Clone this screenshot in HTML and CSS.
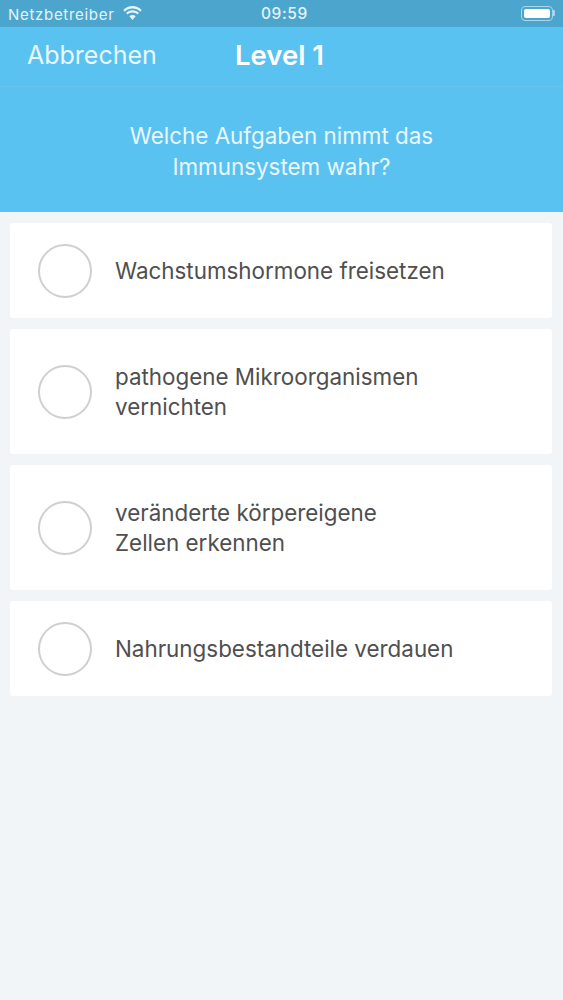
FILE: index.html
```html
<!DOCTYPE html>
<html lang="de">
<head>
<meta charset="utf-8">
<title>Level 1</title>
<link rel="stylesheet" href="styles.css">
</head>
<body>
<div class="status">
  <div class="status-left">
    <span class="carrier">Netzbetreiber</span>
    <svg class="wifi" width="19" height="14" viewBox="0 0 19 14"><path d="M9.500 2.600c3 0 5.700 1.200 7.700 3.100l1.500-1.800C16.200 1.500 13 0 9.500 0S2.800 1.500.3 3.900l1.500 1.800c2-1.900 4.700-3.100 7.700-3.100z" fill="#e6f3f9"/><path d="M9.500 6.600c1.900 0 3.600.7 4.900 1.900l1.500-1.800C14.200 5.100 12 4.200 9.500 4.200S4.800 5.100 3.100 6.700l1.500 1.800c1.300-1.200 3-1.900 4.900-1.900z" fill="#e6f3f9"/><path d="M9.500 9c-1.200 0-2.300.4-3.200 1.200l3.200 3.800 3.200-3.800C11.800 9.400 10.700 9 9.500 9z" fill="#e6f3f9"/></svg>
  </div>
  <span class="time">09:59</span>
  <div class="battery"><div class="battery-fill"></div></div>
</div>
<header class="nav">
  <span class="cancel">Abbrechen</span>
  <span class="title">Level 1</span>
</header>
<div class="question">Welche Aufgaben nimmt das<br>Immunsystem wahr?</div>
<main class="answers">
  <div class="answer single"><span class="radio"></span><span class="label">Wachstumshormone freisetzen</span></div>
  <div class="answer double"><span class="radio"></span><span class="label">pathogene Mikroorganismen<br>vernichten</span></div>
  <div class="answer double"><span class="radio"></span><span class="label">veränderte körpereigene<br>Zellen erkennen</span></div>
  <div class="answer single"><span class="radio"></span><span class="label">Nahrungsbestandteile verdauen</span></div>
</main>
</body>
</html>
```

FILE: styles.css
```css
* { box-sizing: border-box; }
html, body { margin: 0; padding: 0; }
body {
  width: 563px;
  height: 1000px;
  overflow: hidden;
  background: #f2f5f8;
  font-family: Inter, "Liberation Sans", Arial, sans-serif;
  color: #4f4f4f;
}
.status {
  height: 27px;
  background: #4ba5cc;
  color: #e6f3f9;
  display: flex;
  align-items: center;
  justify-content: space-between;
  padding: 1px 10px 0 8px;
  position: relative;
}
.status-left { display: flex; align-items: center; gap: 8px; }
.carrier { font-size: 15px; letter-spacing: 0.700px; }
.wifi { margin-top: -3px; }
.time {
  position: absolute;
  left: 261px;
  top: 5px;
  font-size: 15.500px;
  font-weight: 500;
  letter-spacing: 0.600px;
  line-height: 18px;
}
.battery {
  position: relative;
  width: 32px;
  height: 15px;
  border: 1px solid #a9d6ea;
  border-radius: 4px;
  padding: 2px;
  margin-top: -1px;
}
.battery::after {
  content: "";
  position: absolute;
  right: -3px;
  top: 3px;
  width: 2px;
  height: 6px;
  background: #a9d6ea;
  border-radius: 0 1px 1px 0;
}
.battery-fill { height: 100%; background: #fff; border-radius: 2px; }
.nav {
  height: 60px;
  background: #59c2f1;
  border-bottom: 1px solid #6bc4ec;
  color: #fff;
  display: flex;
  align-items: center;
  padding: 0 0 3px 27px;
}
.cancel { font-size: 25px; color: #eaf7fd; width: 208px; }
.title { font-size: 27.500px; font-weight: 600; }
.question {
  height: 125px;
  background: #59c2f1;
  color: #eaf7fd;
  text-align: center;
  font-size: 22.400px;
  line-height: 31px;
  padding-top: 33px;
}
.answers {
  display: flex;
  flex-direction: column;
  gap: 11px;
  padding: 11px 11px 0 10px;
}
.answer {
  background: #fff;
  border-radius: 3px;
  display: flex;
  align-items: center;
  padding-left: 28px;
  font-size: 22.400px;
  line-height: 30px;
}
.single { height: 95px; }
.double { height: 125px; }
.radio {
  width: 54px;
  height: 54px;
  border: 2px solid #cfcfcf;
  border-radius: 50%;
  flex: none;
  margin-right: 23px;
}
.label { display: block; }
```
